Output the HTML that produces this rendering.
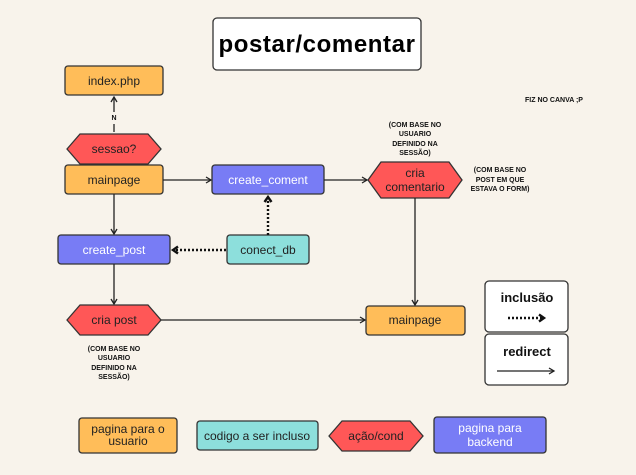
<!DOCTYPE html>
<html><head><meta charset="utf-8"><style>
html,body{margin:0;padding:0;background:#f8f3eb;}
svg{display:block;font-family:"Liberation Sans",sans-serif;}
</style></head><body>
<svg width="636" height="475" viewBox="0 0 636 475" xmlns="http://www.w3.org/2000/svg">
<defs>
<marker id="a" markerWidth="8" markerHeight="8" refX="6" refY="4" orient="auto" markerUnits="userSpaceOnUse"><path d="M1,1 L6,4 L1,7" fill="none" stroke="#222" stroke-width="1.3"/></marker>
<marker id="b" markerWidth="10" markerHeight="10" refX="7" refY="5" orient="auto" markerUnits="userSpaceOnUse"><path d="M2,1.5 L7,5 L2,8.5" fill="none" stroke="#111" stroke-width="2.4"/></marker>
</defs>
<rect width="636" height="475" fill="#f8f3eb"/>
<g stroke="#333" stroke-width="1.3">
<rect x="213" y="18" width="208" height="52" rx="4" fill="#fff"/>
<rect x="65" y="66" width="98" height="29" rx="3" fill="#ffbd59"/>
<polygon points="67,149 80,134 148,134 161,149 148,164 80,164" fill="#ff5757"/>
<rect x="65" y="165" width="98" height="29" rx="3" fill="#ffbd59"/>
<rect x="212" y="165" width="112" height="29" rx="3" fill="#787cf5"/>
<polygon points="368,180 381,162 449,162 462,180 449,198 381,198" fill="#ff5757"/>
<rect x="58" y="235" width="112" height="29" rx="3" fill="#787cf5"/>
<rect x="227" y="235" width="82" height="29" rx="3" fill="#8ddfdc"/>
<polygon points="67,320 80,305 148,305 161,320 148,335 80,335" fill="#ff5757"/>
<rect x="366" y="306" width="99" height="29" rx="3" fill="#ffbd59"/>
<rect x="485" y="281" width="83" height="51" rx="4" fill="#fff"/>
<rect x="485" y="334" width="83" height="51" rx="4" fill="#fff"/>
<rect x="79" y="418" width="98" height="35" rx="3" fill="#ffbd59"/>
<rect x="197" y="421" width="121" height="29" rx="3" fill="#8ddfdc"/>
<polygon points="329,436 342,421 410,421 423,436 410,451 342,451" fill="#ff5757"/>
<rect x="434" y="417" width="112" height="36" rx="3" fill="#787cf5"/>
</g>
<g stroke="#222" stroke-width="1.3" fill="none">
<line x1="114" y1="132" x2="114" y2="124"/>
<line x1="114" y1="112" x2="114" y2="97" marker-end="url(#a)"/>
<line x1="163" y1="180" x2="211" y2="180" marker-end="url(#a)"/>
<line x1="324" y1="180" x2="367" y2="180" marker-end="url(#a)"/>
<line x1="114" y1="194" x2="114" y2="234" marker-end="url(#a)"/>
<line x1="415" y1="198" x2="415" y2="305" marker-end="url(#a)"/>
<line x1="114" y1="264" x2="114" y2="304" marker-end="url(#a)"/>
<line x1="161" y1="320" x2="365" y2="320" marker-end="url(#a)"/>
<line x1="497" y1="371" x2="554" y2="371" marker-end="url(#a)"/>
</g>
<g stroke="#111" stroke-width="2.4" fill="none" stroke-dasharray="2,2">
<line x1="268" y1="235" x2="268" y2="197" marker-end="url(#b)"/>
<line x1="226" y1="250" x2="173" y2="250" marker-end="url(#b)"/>
<line x1="508" y1="318" x2="544" y2="318" marker-end="url(#b)"/>
</g>
<g text-anchor="middle" font-size="12" fill="#222">
<text x="317" y="52" font-size="24" font-weight="bold" fill="#000" letter-spacing="0.6">postar/comentar</text>
<text x="114" y="85">index.php</text>
<text x="114" y="153">sessao?</text>
<text x="114" y="184">mainpage</text>
<text x="268" y="184" fill="#fff">create_coment</text>
<text x="415" y="177">cria</text>
<text x="415" y="191">comentario</text>
<text x="114" y="254" fill="#fff">create_post</text>
<text x="268" y="254">conect_db</text>
<text x="114" y="324">cria post</text>
<text x="415" y="324">mainpage</text>
<text x="527" y="302" font-size="13" font-weight="bold" fill="#111">inclusão</text>
<text x="527" y="356" font-size="13" font-weight="bold" fill="#111">redirect</text>
<text x="128" y="433">pagina para o</text>
<text x="128" y="445">usuario</text>
<text x="257" y="440">codigo a ser incluso</text>
<text x="376" y="440">ação/cond</text>
<text x="490" y="432" fill="#fff">pagina para</text>
<text x="490" y="446" fill="#fff">backend</text>
</g>
<g text-anchor="middle" font-size="7" font-weight="bold" fill="#111">
<text x="114" y="120">N</text>
<text x="554" y="102">FIZ NO CANVA ;P</text>
<text x="415" y="127">(COM BASE NO</text>
<text x="415" y="136">USUARIO</text>
<text x="415" y="146">DEFINIDO NA</text>
<text x="415" y="155">SESSÃO)</text>
<text x="500" y="172">(COM BASE NO</text>
<text x="500" y="182">POST EM QUE</text>
<text x="500" y="191">ESTAVA O FORM)</text>
<text x="114" y="351">(COM BASE NO</text>
<text x="114" y="360">USUARIO</text>
<text x="114" y="370">DEFINIDO NA</text>
<text x="114" y="379">SESSÃO)</text>
</g>
</svg>
</body></html>
